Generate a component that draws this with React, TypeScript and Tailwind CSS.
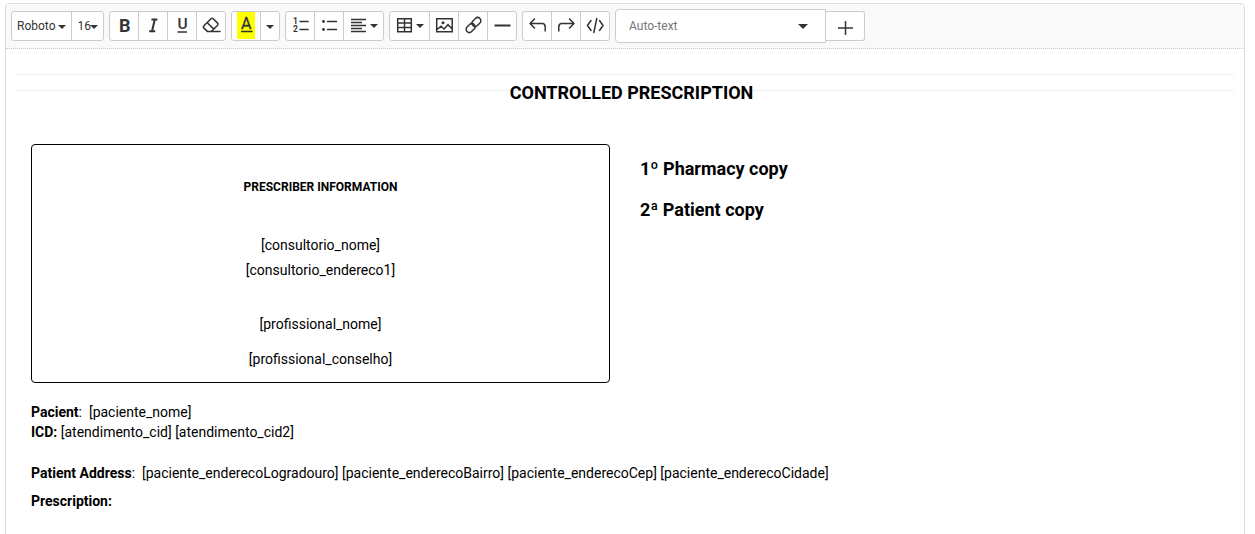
import type { ReactNode } from "react";

function Group({ children }: { children: ReactNode }) {
  return (
    <div className="flex h-[30px] rounded-[3px] border border-[#ccc] bg-white divide-x divide-[#ccc] overflow-hidden">
      {children}
    </div>
  );
}

function Btn({ children, className = "w-[29px]" }: { children: ReactNode; className?: string }) {
  return <button className={`flex shrink-0 items-center justify-center ${className}`}>{children}</button>;
}

function Icon({ children, w = 28 }: { children: ReactNode; w?: number }) {
  return (
    <svg
      className="shrink-0"
      width={w}
      height={28}
      viewBox={`0 0 ${w} 28`}
      fill="none"
      stroke="#333"
      strokeWidth={1.5}
      strokeLinecap="round"
      strokeLinejoin="round"
    >
      {children}
    </svg>
  );
}

function Caret({ x, y = 13 }: { x: number; y?: number }) {
  return <path d={`M${x} ${y}h8l-4 4z`} fill="#333" stroke="none" />;
}

function Toolbar() {
  return (
    <div className="flex h-[45px] items-start gap-[5px] border-b border-dotted border-[#ccc] bg-[#f9f9f9] pl-[5px] pt-[7px] text-[#333]">
      <Group>
        <Btn className="w-[60px]">
          <Icon w={59}>
            <text x="5" y="18" fontSize="12" fill="#333" stroke="none">Roboto</text>
            <Caret x={46} />
          </Icon>
        </Btn>
        <Btn className="w-[31px]">
          <Icon w={31}>
            <text x="5.5" y="18" fontSize="12" fill="#333" stroke="none">16</text>
            <Caret x={18} />
          </Icon>
        </Btn>
      </Group>

      <Group>
        <Btn>
          <Icon>
            <text x="9" y="19.5" fontSize="18" fontWeight="700" fill="#333" stroke="none">B</text>
          </Icon>
        </Btn>
        <Btn>
          <Icon>
            <path d="M12.4 7.5h6M10.2 19.2h6M15.8 7.5L13 19.2" strokeWidth="2" strokeLinecap="butt" />
          </Icon>
        </Btn>
        <Btn>
          <Icon>
            <text x="9.4" y="17" fontSize="15.5" fontWeight="500" fill="#333" stroke="none">U</text>
            <path d="M9.5 20h9.5" strokeLinecap="butt" />
          </Icon>
        </Btn>
        <Btn className="w-[28px]">
          <Icon>
            <path d="M6.7 14l7.3-7.2q1.1-1 2.2 0l4.4 4.3q1 1 0 2.1l-6.2 6.2h-4l-3.7-3.5q-.9-.9 0-1.9zM10.3 10.8l6.5 6.3M12 19.4h11" />
          </Icon>
        </Btn>
      </Group>

      <Group>
        <Btn>
          <Icon>
            <rect x="5" y="0" width="18" height="27" fill="#ff0" stroke="none" />
            <text x="9" y="17" fontSize="16" fill="#333" stroke="#333" strokeWidth="0.3">A</text>
            <path d="M9 19.5h11.5" strokeLinecap="butt" />
          </Icon>
        </Btn>
        <Btn className="w-[18px]">
          <Icon w={18}>
            <Caret x={5} />
          </Icon>
        </Btn>
      </Group>

      <Group>
        <Btn>
          <Icon>
            <text x="7" y="12" fontSize="8.5" fontWeight="700" fill="#333" stroke="none">1</text>
            <text x="7" y="20" fontSize="8.5" fontWeight="700" fill="#333" stroke="none">2</text>
            <path d="M14 9.5h8M14 17.5h8" />
          </Icon>
        </Btn>
        <Btn>
          <Icon>
            <path d="M12.5 9.5h9M12.5 17.5h9" />
            <circle cx="8.5" cy="9.5" r="1.4" fill="#333" stroke="none" />
            <circle cx="8.5" cy="17.5" r="1.4" fill="#333" stroke="none" />
          </Icon>
        </Btn>
        <Btn className="w-[39px]">
          <Icon w={39}>
            <path d="M7 7.5h15M7 10.5h11M7 13.5h15M7 16.5h11M7 19.5h15" strokeWidth="1.5" strokeLinecap="butt" />
            <Caret x={26} y={12} />
          </Icon>
        </Btn>
      </Group>

      <Group>
        <Btn className="w-[40px]">
          <Icon w={39}>
            <path d="M7.7 6.7h13.6v13H7.7zM7.7 11h13.6M7.7 15.4h13.6M14.5 6.7v13" strokeLinejoin="miter" />
            <Caret x={26} y={12} />
          </Icon>
        </Btn>
        <Btn>
          <Icon>
            <path d="M6.7 6.7h15.5v13H6.7zM7 17.5l4-3.3 3 2.8 4-4.3 4 4" strokeLinejoin="miter" />
            <circle cx="13" cy="10.8" r="1.5" fill="#333" stroke="none" />
          </Icon>
        </Btn>
        <Btn>
          <Icon>
            <rect x="-5" y="-3.2" width="10" height="6.4" rx="3.2" transform="translate(17.4 10) rotate(-45)" />
            <rect x="-5" y="-3.2" width="10" height="6.4" rx="3.2" transform="translate(11.6 16) rotate(-45)" />
          </Icon>
        </Btn>
        <Btn className="w-[28px]">
          <Icon>
            <path d="M6.5 13.5h16" strokeWidth="1.8" strokeLinecap="butt" />
          </Icon>
        </Btn>
      </Group>

      <Group>
        <Btn>
          <Icon>
            <path d="M11.5 7L7 11.5l4.5 4.5M7 11.5h12q3.2 0 3.2 3.2V19" />
          </Icon>
        </Btn>
        <Btn>
          <Icon>
            <path d="M17.5 7l4.5 4.5-4.5 4.5M22 11.5H10q-3.2 0-3.2 3.2V19" />
          </Icon>
        </Btn>
        <Btn className="w-[28px]">
          <Icon>
            <path d="M10 8.5L6.5 13.5l3.5 5M18.5 8.5l3.5 5-3.5 5M15.8 6.5l-3 14" />
          </Icon>
        </Btn>
      </Group>

      <div className="flex">
        <button className="-mt-0.5 flex h-[34px] w-[211px] items-center justify-between rounded-l-[4px] border border-[#ccc] bg-white pl-[13px] pr-[17px] text-[12px] text-[#777]">
          <span>Auto-text</span>
          <svg width="10" height="5" viewBox="0 0 10 5" fill="#333">
            <path d="M0 0h10L5 5z" />
          </svg>
        </button>
        <button className="h-[30px] w-[39px] rounded-r-[3px] border border-l-0 border-[#ccc] bg-white">
          <Icon w={38}>
            <path d="M12 16h15M19.5 9v14" strokeLinecap="butt" />
          </Icon>
        </button>
      </div>
    </div>
  );
}

function Document() {
  return (
    <div className="px-2.5 pt-[25px] text-[14px] leading-5 text-black">
      <hr className="border-[#eee]" />
      <hr className="mt-[15px] border-[#eee]" />
      <h1 className="relative -mt-2 pl-[13px] text-center text-[18px] font-bold leading-5">
        CONTROLLED PRESCRIPTION
      </h1>

      <div className="mt-[41px] flex pl-[15px]">
        <div className="h-[239px] w-[579px] rounded-[4px] border border-black text-center">
          <h2 className="mt-8 text-[12px] font-bold leading-5">PRESCRIBER INFORMATION</h2>
          <p className="mt-[38px]">[consultorio_nome]</p>
          <p className="mt-[5px]">[consultorio_endereco1]</p>
          <p className="mt-[34px]">[profissional_nome]</p>
          <p className="mt-[15px]">[profissional_conselho]</p>
        </div>
        <div className="ml-[30px] pt-[15px] text-[18px] font-bold leading-5">
          <p>1º Pharmacy copy</p>
          <p className="mt-[21px]">2ª Patient copy</p>
        </div>
      </div>

      <div className="mt-[19px] pl-[15px]">
        <p><b>Pacient</b>:&nbsp; [paciente_nome]</p>
        <p><b>ICD:</b> [atendimento_cid] [atendimento_cid2]</p>
        <p className="mt-[21px]">
          <b>Patient Address</b>:&nbsp; [paciente_enderecoLogradouro] [paciente_enderecoBairro] [paciente_enderecoCep] [paciente_enderecoCidade]
        </p>
        <p className="mt-2"><b>Prescription:</b></p>
      </div>
    </div>
  );
}

export default function App() {
  return (
    <div className="h-[534px] overflow-hidden bg-white pl-[5px] pr-2.5 pt-[3px] font-['Roboto',sans-serif]">
      <div className="h-[560px] overflow-hidden rounded-[4px] border border-[#ddd]">
        <Toolbar />
        <Document />
      </div>
    </div>
  );
}
